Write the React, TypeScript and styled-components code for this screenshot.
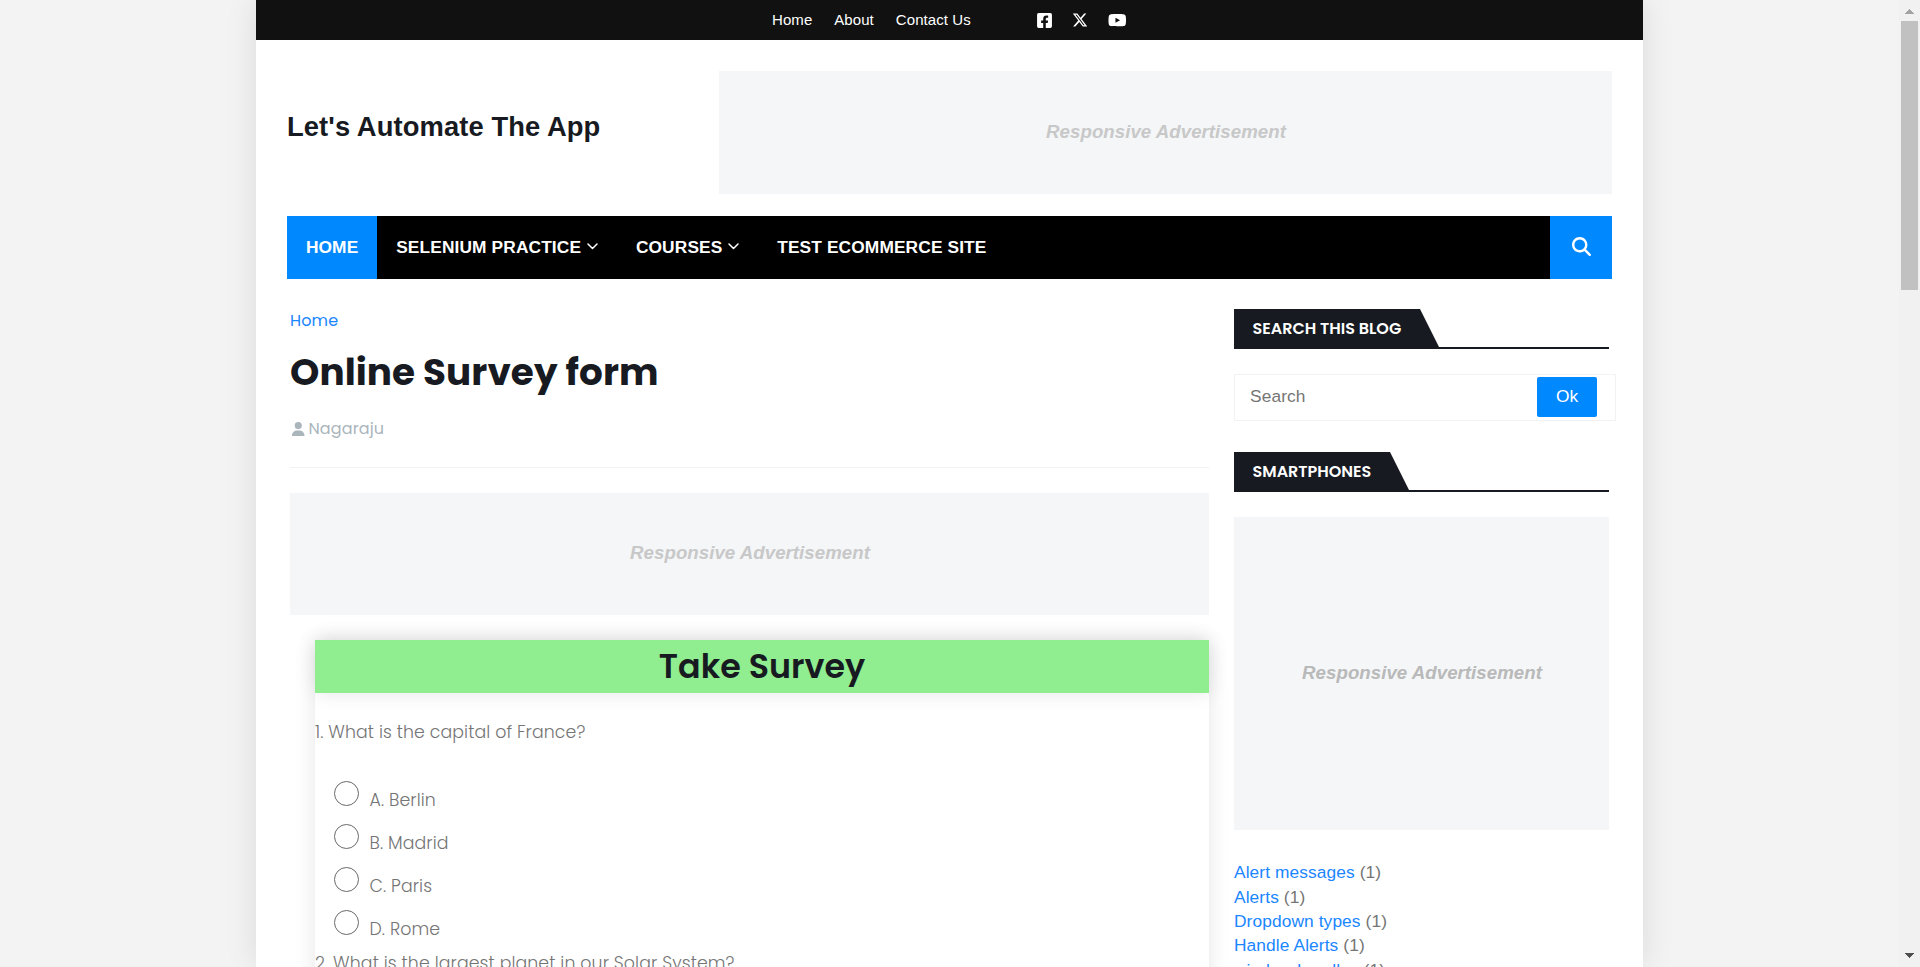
import React from 'react';
import styled, { createGlobalStyle } from 'styled-components';
import { FaXTwitter, FaYoutube, FaMagnifyingGlass, FaUser } from 'react-icons/fa6';
import { FaFacebookSquare } from 'react-icons/fa';

const sans = `'Liberation Sans', Arial, sans-serif`;
const poppins = `Poppins, Inter, sans-serif`;
const ink = '#171a21';
const accent = '#0088ff';

const GlobalStyle = createGlobalStyle`
  *, *::before, *::after { box-sizing: border-box; }
  html, body { margin: 0; padding: 0; overflow: hidden; }
  body { background: #f3f3f3; font-family: ${sans}; color: #757575; }
  h1, h2, h3, p, ul, ol { margin: 0; padding: 0; }
  ul, ol { list-style: none; }
  a { text-decoration: none; color: inherit; }
`;

const Viewport = styled.div`
  display: flex;
  justify-content: space-between;
  height: 967px;
  overflow: hidden;
`;

const Page = styled.div`
  width: 1387px;
  height: 967px;
  margin-left: 256px;
  background: #fff;
  box-shadow: 0 0 30px rgba(0, 0, 0, 0.1);
`;

const TopBar = styled.div`
  height: 40px;
  padding-left: 516px;
  background: #111;
  color: #fff;
  display: flex;
  align-items: center;
`;

const TopLinks = styled.nav`
  display: flex;
  gap: 22px;
  font-size: 15px;
  line-height: 40px;
  letter-spacing: 0.07px;
`;

const SocialLinks = styled.div`
  display: flex;
  align-items: center;
  margin-left: 66px;
  svg { display: block; }
  a + a { margin-left: 20px; }
`;

const FacebookIcon = styled(FaFacebookSquare)`
  width: 15px;
  height: 17px;
`;

const XIcon = styled(FaXTwitter)`
  width: 16px;
  height: 16px;
`;

const YoutubeIcon = styled(FaYoutube)`
  width: 18.5px;
  height: 16.5px;
`;

const Header = styled.header`
  display: flex;
  justify-content: space-between;
  align-items: flex-start;
  height: 176px;
  padding: 31px 31px 0;
`;

const BlogTitle = styled.h1`
  margin-top: 34.5px;
  color: ${ink};
  font-size: 27.33px;
  line-height: 41px;
  letter-spacing: 0.1px;
  white-space: nowrap;
`;

const AdBox = styled.div<{ $w: number; $h: number; $color?: string; $lift?: number }>`
  flex: none;
  width: ${(p) => p.$w}px;
  height: ${(p) => p.$h}px;
  padding: 0 0 ${(p) => p.$lift ?? 0}px 1px;
  display: flex;
  align-items: center;
  justify-content: center;
  background: #f4f6f8;
  color: ${(p) => p.$color ?? '#c8c8c8'};
  font: italic 700 18.67px/28px ${sans};
  letter-spacing: 0.04px;
`;

const MainNav = styled.nav`
  display: flex;
  height: 63px;
  margin: 0 31px;
  background: #000;
  color: #fff;
`;

const NavItem = styled.a<{ $active?: boolean }>`
  display: flex;
  align-items: center;
  padding: 0 18.9px;
  font-size: 17.33px;
  font-weight: 700;
  letter-spacing: 0.12px;
  background: ${(p) => (p.$active ? accent : 'transparent')};
  svg { margin: 0 0 2px 6px; }
`;

const SearchToggle = styled.button`
  width: 62px;
  margin-left: auto;
  padding: 0 0 2px;
  border: 0;
  background: ${accent};
  color: #fff;
  display: flex;
  align-items: center;
  justify-content: center;
`;

const Columns = styled.div`
  display: flex;
  gap: 25px;
  padding: 30px 27px 0 34px;
`;

const Main = styled.main`
  width: 919px;
  font-family: ${poppins};
`;

const Breadcrumb = styled.a`
  display: block;
  padding-top: 1px;
  color: #1a86ff;
  font-size: 16px;
  line-height: 22px;
  font-weight: 400;
  letter-spacing: 0.15px;
`;

const PostTitle = styled.h1`
  margin-top: 16px;
  color: ${ink};
  font-size: 37.33px;
  line-height: 48px;
  font-weight: 700;
  letter-spacing: 0.07px;
`;

const Byline = styled.div`
  display: flex;
  align-items: center;
  gap: 4px;
  height: 24px;
  margin-top: 21px;
  padding-left: 2px;
  color: #aab5bc;
  font-size: 16px;
  line-height: 24px;
  letter-spacing: 0.12px;
`;

const AuthorIcon = styled(FaUser)`
  width: 12.5px;
  height: 14.3px;
`;

const Divider = styled.hr`
  height: 1px;
  margin: 26px 0 25px;
  border: 0;
  background: #f2f2f4;
`;

const Survey = styled.section`
  width: 894px;
  height: 400px;
  margin: 25px 0 0 25px;
  background: #fff;
  box-shadow: 0 0 20px rgba(0, 0, 0, 0.1);
`;

const SurveyTitle = styled.h2`
  height: 53px;
  background: lightgreen;
  box-shadow: 0 0 20px rgba(0, 0, 0, 0.1);
  color: ${ink};
  font-size: 33.33px;
  line-height: 53px;
  font-weight: 600;
  text-align: center;
`;

const Question = styled.p<{ $top: number }>`
  margin-top: ${(p) => p.$top}px;
  font-size: 17.33px;
  line-height: 26px;
  font-weight: 300;
  letter-spacing: 0.1px;
  white-space: nowrap;
`;

const Options = styled.ul`
  margin-top: 34px;
  padding-left: 19px;
`;

const Option = styled.li`
  display: flex;
  align-items: flex-start;
  height: 43px;
`;

const Radio = styled.input`
  appearance: none;
  width: 25px;
  height: 25px;
  margin: 2px 10.5px 0 0;
  border: 1px solid #6a6a6a;
  border-radius: 50%;
  background: #fff;
`;

const OptionLabel = styled.label`
  margin-top: 8px;
  font-size: 17.33px;
  line-height: 26px;
  font-weight: 300;
  letter-spacing: 0.1px;
`;

const Sidebar = styled.aside`
  width: 382px;
`;

const WidgetHeading = styled.div`
  width: 375px;
  height: 40px;
  border-bottom: 2px solid ${ink};
`;

const WidgetTitle = styled.h3<{ $w: number }>`
  width: ${(p) => p.$w}px;
  height: 38px;
  padding-left: 18.5px;
  background: ${ink};
  clip-path: polygon(0 0, calc(100% - 19px) 0, 100% 100%, 0 100%);
  color: #fff;
  font: 600 16px/39px ${poppins};
`;

const SearchForm = styled.form`
  display: flex;
  width: 382px;
  height: 47px;
  margin: 25px 0 31px;
  padding: 2px 18px 0 15px;
  border: 1px solid #f2f2f4;
`;

const SearchInput = styled.input`
  flex: 1;
  min-width: 0;
  height: 38px;
  padding: 0;
  border: 0;
  outline: 0;
  background: transparent;
  font: 17.33px ${sans};
  letter-spacing: 0.1px;
  &::placeholder { color: #757575; opacity: 1; }
`;

const OkButton = styled.button`
  width: 60px;
  height: 40px;
  padding: 0 0 2px;
  border: 0;
  border-radius: 2px;
  background: ${accent};
  color: #fff;
  font: 17.33px ${sans};
`;

const AdSlot = styled.div`
  margin-top: 25px;
`;

const Labels = styled.ul`
  margin-top: 30px;
  font-size: 17.33px;
  line-height: 24.3px;
  letter-spacing: 0.1px;
  a { color: #1a86ff; }
`;

const ScrollBar = styled.div`
  display: flex;
  flex-direction: column;
  align-items: center;
  width: 21px;
  height: 967px;
  padding: 9px 0;
  background: #f1f1f1;
`;

const ScrollThumb = styled.div`
  width: 17px;
  height: 269px;
  margin: 7px 0 auto;
  background: #c1c1c1;
`;

const Chevron = () => (
  <svg width="11" height="7" viewBox="0 0 11 7" fill="none" stroke="#fff" strokeWidth="1.5" strokeLinecap="round" strokeLinejoin="round">
    <path d="M1 1l4.5 4.5L10 1" />
  </svg>
);

const Arrow = ({ down }: { down?: boolean }) => (
  <svg width="9" height="5" viewBox="0 0 9 5" shapeRendering="crispEdges">
    <path d={down ? 'M0 0h9L4.5 5z' : 'M0 5h9L4.5 0z'} fill={down ? '#505050' : '#a3a3a3'} />
  </svg>
);

const menu = [
  { label: 'HOME', active: true },
  { label: 'SELENIUM PRACTICE', sub: true },
  { label: 'COURSES', sub: true },
  { label: 'TEST ECOMMERCE SITE' },
];
const answers = ['A. Berlin', 'B. Madrid', 'C. Paris', 'D. Rome'];
const labels = ['Alert messages', 'Alerts', 'Dropdown types', 'Handle Alerts', 'window handles'];

export default function App() {
  return (
    <>
      <GlobalStyle />
      <Viewport>
        <Page>
          <TopBar>
            <TopLinks>
              <a href="#">Home</a>
              <a href="#">About</a>
              <a href="#">Contact Us</a>
            </TopLinks>
            <SocialLinks>
              <a href="#"><FacebookIcon /></a>
              <a href="#"><XIcon /></a>
              <a href="#"><YoutubeIcon /></a>
            </SocialLinks>
          </TopBar>
          <Header>
            <BlogTitle>Let's Automate The App</BlogTitle>
            <AdBox $w={893} $h={123.33} $lift={1}>Responsive Advertisement</AdBox>
          </Header>
          <MainNav>
            {menu.map((m) => (
              <NavItem key={m.label} href="#" $active={m.active}>
                {m.label}
                {m.sub && <Chevron />}
              </NavItem>
            ))}
            <SearchToggle><FaMagnifyingGlass size={19} /></SearchToggle>
          </MainNav>
          <Columns>
            <Main>
              <Breadcrumb href="#">Home</Breadcrumb>
              <PostTitle>Online Survey form</PostTitle>
              <Byline><AuthorIcon />Nagaraju</Byline>
              <Divider />
              <AdBox $w={919} $h={122} $lift={3}>Responsive Advertisement</AdBox>
              <Survey>
                <SurveyTitle>Take Survey</SurveyTitle>
                <Question $top={26}>1. What is the capital of France?</Question>
                <Options>
                  {answers.map((a) => (
                    <Option key={a}>
                      <Radio type="radio" name="q1" id={a} />
                      <OptionLabel htmlFor={a}>{a}</OptionLabel>
                    </Option>
                  ))}
                </Options>
                <Question $top={-1}>2. What is the largest planet in our Solar System?</Question>
              </Survey>
            </Main>
            <Sidebar>
              <WidgetHeading><WidgetTitle $w={205}>SEARCH THIS BLOG</WidgetTitle></WidgetHeading>
              <SearchForm>
                <SearchInput placeholder="Search" />
                <OkButton type="button">Ok</OkButton>
              </SearchForm>
              <WidgetHeading><WidgetTitle $w={175}>SMARTPHONES</WidgetTitle></WidgetHeading>
              <AdSlot><AdBox $w={375} $h={313.33} $lift={2} $color="#b9b9b9">Responsive Advertisement</AdBox></AdSlot>
              <Labels>
                {labels.map((l) => (
                  <li key={l}><a href="#">{l}</a> (1)</li>
                ))}
              </Labels>
            </Sidebar>
          </Columns>
        </Page>
        <ScrollBar>
          <Arrow />
          <ScrollThumb />
          <Arrow down />
        </ScrollBar>
      </Viewport>
    </>
  );
}
